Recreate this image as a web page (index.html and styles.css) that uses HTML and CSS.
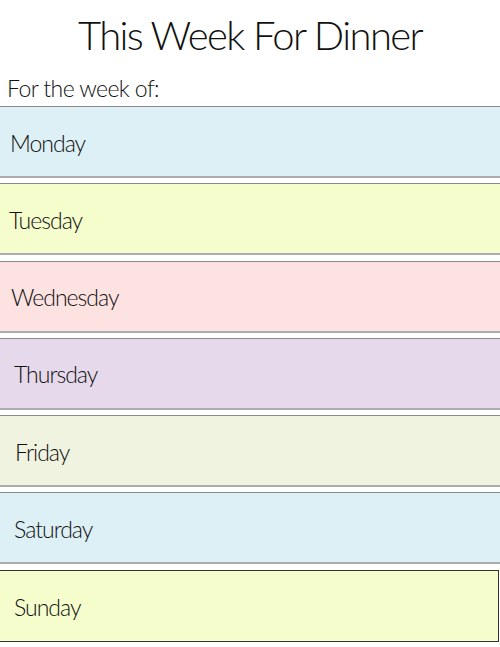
FILE: index.html
```html
<!DOCTYPE html>
<html>
<head>
<meta charset="utf-8">
<link rel="stylesheet" href="styles.css">
</head>
<body>
<h1 class="title">This Week For Dinner</h1>
<p class="week">For the week of:</p>
<div class="days">
  <div class="day blue"><span class="label l1">Monday</span></div>
  <div class="day yellow"><span class="label l2">Tuesday</span></div>
  <div class="day pink"><span class="label l3">Wednesday</span></div>
  <div class="day purple"><span class="label l4">Thursday</span></div>
  <div class="day cream"><span class="label l5">Friday</span></div>
  <div class="day blue"><span class="label l4">Saturday</span></div>
  <div class="day yellow last"><span class="label l4">Sunday</span></div>
</div>
</body>
</html>
```
FILE: styles.css
```css
html, body {
  margin: 0;
  padding: 0;
  background: #ffffff;
}
body {
  font-family: Lato, "Open Sans", sans-serif;
  font-weight: 300;
  color: #111;
  width: 500px;
  overflow: hidden;
}
.title {
  margin: 0;
  padding-top: 11px;
  height: 59px;
  font-size: 40px;
  line-height: 48px;
  font-weight: 300;
  text-align: center;
  letter-spacing: -1.6px;
}
.week {
  margin: 0;
  padding-left: 7px;
  height: 36px;
  font-size: 23px;
  line-height: 36px;
  letter-spacing: -0.6px;
}
.days {
  display: flex;
  flex-direction: column;
  gap: 5.3px;
}
.day {
  height: 69px;
  border-top: 1px solid #8a8a8a;
  border-bottom: 2px solid #acacac;
  display: flex;
  align-items: center;
  font-size: 23px;
  letter-spacing: -1px;
}
.label { padding-left: 10px; padding-top: 2px; }
.l2 { padding-left: 9px; }
.l3 { padding-left: 11px; }
.l4 { padding-left: 14px; }
.l5 { padding-left: 15px; }
.blue { background: #ddf0f5; }
.yellow { background: #f5fdcd; }
.pink { background: #fde2e2; }
.purple { background: #e5d9eb; }
.cream { background: #f0f3e0; }
.day.last {
  border: 1px solid #333;
  border-left: none;
  width: 498px;
  height: 70px;
}
```
